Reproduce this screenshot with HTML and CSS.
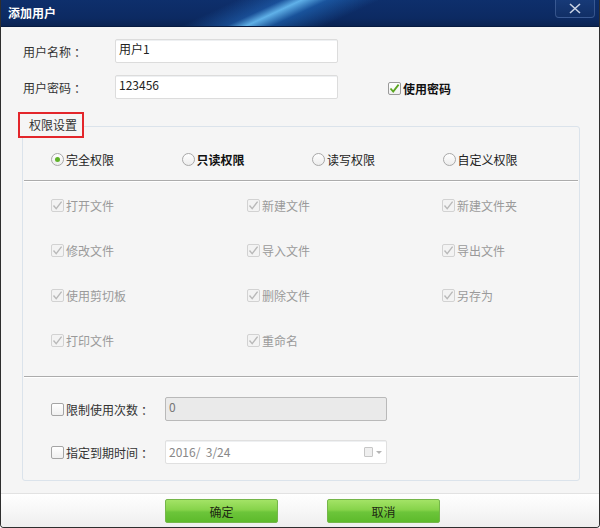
FILE: index.html
```html
<!DOCTYPE html>
<html lang="zh-CN">
<head>
<meta charset="utf-8">
<title>添加用户</title>
<link rel="stylesheet" href="styles.css">
</head>
<body>
<div class="window">
  <div class="titlebar">
    <span class="title">添加用户</span>
    <div class="close">
      <svg width="12" height="11" viewBox="0 0 12 11"><path d="M1 1 L11 10 M11 1 L1 10" stroke="#c9d3e4" stroke-width="1.6" fill="none"/></svg>
    </div>
  </div>
  <div class="content">
    <div class="form-row">
      <span class="label">用户名称<span class="colon">：</span></span>
      <div class="input">用户1</div>
    </div>
    <div class="form-row">
      <span class="label">用户密码<span class="colon">：</span></span>
      <div class="input">123456</div>
      <label class="use-pwd">
        <span class="cb cb-on">
          <svg width="11" height="11" viewBox="0 0 11 11"><path d="M1.5 5.5 L4.2 8.6 L9.6 1.6" stroke="#5aa51f" stroke-width="1.8" fill="none"/></svg>
        </span>
        <span class="strong">使用密码</span>
      </label>
    </div>

    <div class="group">
      <div class="legend">权限设置</div>
      <div class="radios">
        <div class="radio-item"><span class="radio on"><span class="dot"></span></span><span>完全权限</span></div>
        <div class="radio-item"><span class="radio"></span><span class="strong">只读权限</span></div>
        <div class="radio-item"><span class="radio"></span><span>读写权限</span></div>
        <div class="radio-item"><span class="radio"></span><span>自定义权限</span></div>
      </div>
      <div class="sep"></div>
      <div class="perms">
        <div class="perm"><span class="cb cb-dis"><svg width="11" height="11" viewBox="0 0 11 11"><path d="M1.5 5.5 L4.2 8.6 L9.6 1.6" stroke="#b9b9b9" stroke-width="1.4" fill="none"/></svg></span><span>打开文件</span></div>
        <div class="perm"><span class="cb cb-dis"><svg width="11" height="11" viewBox="0 0 11 11"><path d="M1.5 5.5 L4.2 8.6 L9.6 1.6" stroke="#b9b9b9" stroke-width="1.4" fill="none"/></svg></span><span>新建文件</span></div>
        <div class="perm"><span class="cb cb-dis"><svg width="11" height="11" viewBox="0 0 11 11"><path d="M1.5 5.5 L4.2 8.6 L9.6 1.6" stroke="#b9b9b9" stroke-width="1.4" fill="none"/></svg></span><span>新建文件夹</span></div>
        <div class="perm"><span class="cb cb-dis"><svg width="11" height="11" viewBox="0 0 11 11"><path d="M1.5 5.5 L4.2 8.6 L9.6 1.6" stroke="#b9b9b9" stroke-width="1.4" fill="none"/></svg></span><span>修改文件</span></div>
        <div class="perm"><span class="cb cb-dis"><svg width="11" height="11" viewBox="0 0 11 11"><path d="M1.5 5.5 L4.2 8.6 L9.6 1.6" stroke="#b9b9b9" stroke-width="1.4" fill="none"/></svg></span><span>导入文件</span></div>
        <div class="perm"><span class="cb cb-dis"><svg width="11" height="11" viewBox="0 0 11 11"><path d="M1.5 5.5 L4.2 8.6 L9.6 1.6" stroke="#b9b9b9" stroke-width="1.4" fill="none"/></svg></span><span>导出文件</span></div>
        <div class="perm"><span class="cb cb-dis"><svg width="11" height="11" viewBox="0 0 11 11"><path d="M1.5 5.5 L4.2 8.6 L9.6 1.6" stroke="#b9b9b9" stroke-width="1.4" fill="none"/></svg></span><span>使用剪切板</span></div>
        <div class="perm"><span class="cb cb-dis"><svg width="11" height="11" viewBox="0 0 11 11"><path d="M1.5 5.5 L4.2 8.6 L9.6 1.6" stroke="#b9b9b9" stroke-width="1.4" fill="none"/></svg></span><span>删除文件</span></div>
        <div class="perm"><span class="cb cb-dis"><svg width="11" height="11" viewBox="0 0 11 11"><path d="M1.5 5.5 L4.2 8.6 L9.6 1.6" stroke="#b9b9b9" stroke-width="1.4" fill="none"/></svg></span><span>另存为</span></div>
        <div class="perm"><span class="cb cb-dis"><svg width="11" height="11" viewBox="0 0 11 11"><path d="M1.5 5.5 L4.2 8.6 L9.6 1.6" stroke="#b9b9b9" stroke-width="1.4" fill="none"/></svg></span><span>打印文件</span></div>
        <div class="perm"><span class="cb cb-dis"><svg width="11" height="11" viewBox="0 0 11 11"><path d="M1.5 5.5 L4.2 8.6 L9.6 1.6" stroke="#b9b9b9" stroke-width="1.4" fill="none"/></svg></span><span>重命名</span></div>
      </div>
      <div class="sep sep2"></div>
      <div class="limit-row">
        <div class="limit-label"><span class="cb"></span><span>限制使用次数<span class="colon">：</span></span></div>
        <div class="input input-dis">0</div>
      </div>
      <div class="limit-row">
        <div class="limit-label"><span class="cb"></span><span>指定到期时间<span class="colon">：</span></span></div>
        <div class="input input-date">
          <span class="date-text">2016/&nbsp; 3/24</span>
          <span class="cal"></span>
          <span class="arrow"></span>
        </div>
      </div>
    </div>
  </div>
  <div class="footer">
    <div class="btn">确定</div>
    <div class="btn">取消</div>
  </div>
</div>
</body>
</html>
```

FILE: styles.css
```css
* { box-sizing: border-box; }
html, body { margin: 0; padding: 0; }
body {
  width: 600px;
  height: 528px;
  background: #ffffff;
  font-family: "Noto Sans CJK SC", "DejaVu Sans", sans-serif;
  font-size: 12px;
  color: #333;
}
.window {
  width: 600px;
  height: 528px;
  border-left: 1px solid #2e2e2e;
  border-right: 1px solid #2e2e2e;
  border-bottom: 1px solid #2e2e2e;
  border-radius: 0 0 4px 4px;
  background: #f5f5f5;
  display: flex;
  flex-direction: column;
  overflow: hidden;
}
.titlebar {
  height: 27px;
  flex: none;
  display: flex;
  align-items: center;
  justify-content: space-between;
  padding-left: 7px;
  background:
    linear-gradient(155deg, rgba(0,0,0,0) 36%, rgba(40,120,210,0.45) 43%, rgba(110,200,255,0.85) 46%, rgba(40,130,220,0.45) 50%, rgba(0,0,0,0) 58%),
    linear-gradient(180deg, #0e2f6c 0%, #0c2a62 70%, #0a2352 100%);
  border-bottom: 1px solid #061a40;
}
.title {
  color: #ffffff;
  font-weight: bold;
  font-size: 12px;
  line-height: 1;
}
.close {
  align-self: flex-start;
  width: 40px;
  height: 18px;
  margin-right: 4px;
  border: 1px solid rgba(120,150,200,0.35);
  border-top: none;
  border-radius: 0 0 4px 4px;
  background: linear-gradient(180deg, #173a78, #112f66);
  display: flex;
  align-items: center;
  justify-content: center;
}
.content {
  flex: 1;
  padding: 12px 21px 0 21px;
}
.form-row {
  display: flex;
  align-items: center;
  height: 24px;
  margin-bottom: 12px;
}
.label {
  width: 93px;
  padding-left: 1px;
  color: #333;
}
.colon {
  padding-left: 3px;
}
.input {
  width: 223px;
  height: 24px;
  border: 1px solid #dcdcdc;
  border-radius: 2px;
  background: #ffffff;
  padding: 2px 3px 0 3px;
  line-height: 14px;
  color: #222;
  box-shadow: inset 0 1px 0 #eef0f2;
}
.use-pwd {
  display: flex;
  align-items: center;
  margin-left: 50px;
  margin-top: 3px;
  gap: 2px;
}
.strong { font-weight: bold; color: #111; }
.cb {
  width: 13px;
  height: 13px;
  border: 1px solid #a5a5a5;
  border-radius: 2px;
  background: linear-gradient(180deg, #ffffff, #f0f0f0);
  display: inline-flex;
  align-items: center;
  justify-content: center;
  flex: none;
}
.cb-on { border-color: #9a9a9a; }
.cb-dis { border-color: #d2d2d2; background: #f3f3f3; }

.group {
  position: relative;
  margin-top: 27px;
  width: 558px;
  height: 355px;
  border: 1px solid #dbe3eb;
  border-radius: 3px;
  padding: 22px 0 0 0;
}
.legend {
  position: absolute;
  left: -5px;
  top: -15px;
  width: 66px;
  height: 26px;
  border: 2px solid #e3262b;
  background: #f5f5f5;
  padding-left: 9px;
  line-height: 21px;
  color: #333;
}
.radios {
  display: grid;
  grid-template-columns: repeat(4, 130.5px);
  padding-left: 28px;
  height: 20px;
  align-items: center;
}
.radio-item { display: flex; align-items: center; gap: 2px; color: #222; }
.radio {
  width: 13px;
  height: 13px;
  border-radius: 50%;
  border: 1px solid #a8a8a8;
  background: linear-gradient(180deg, #ffffff, #ececec);
  display: inline-flex;
  align-items: center;
  justify-content: center;
  flex: none;
}
.dot {
  width: 5px;
  height: 5px;
  border-radius: 50%;
  background: #5fb22a;
}
.sep {
  margin: 11px 1px 0 1px;
  height: 2px;
  border-top: 1px solid #acacac;
  border-bottom: 1px solid #ffffff;
}
.perms {
  display: grid;
  grid-template-columns: 196px 195px 120px;
  grid-auto-rows: 20px;
  row-gap: 25px;
  padding-left: 28px;
  margin-top: 13px;
}
.perm { display: flex; align-items: center; gap: 2px; color: #9a9a9a; }
.sep2 { margin-top: 26px; }
.limit-row {
  display: flex;
  align-items: center;
  padding-left: 28px;
  height: 24px;
  margin-top: 19px;
}
.limit-row + .limit-row { margin-top: 19px; }
.limit-label {
  width: 114px;
  display: flex;
  align-items: center;
  gap: 2px;
  color: #333;
}
.limit-row .input { width: 222px; }
.input-dis {
  background: #eaeaea;
  border-color: #b9b9b9;
  color: #777;
  box-shadow: none;
}
.input-date {
  display: flex;
  align-items: center;
  padding-top: 0;
  color: #888;
  border-color: #e0e0e0;
}
.date-text { flex: 1; }
.cal {
  width: 9px;
  height: 10px;
  border: 1px solid #c6c6c6;
  background: #efefef;
  border-radius: 1px;
  margin-right: 3px;
}
.arrow {
  width: 0;
  height: 0;
  border-left: 3px solid transparent;
  border-right: 3px solid transparent;
  border-top: 3px solid #b5b5b5;
  margin-right: 1px;
}
.footer {
  height: 34px;
  flex: none;
  border-top: 1px solid #e2e2e2;
  background: linear-gradient(180deg, #ffffff 0%, #f7f7f7 50%, #eeeeee 100%);
  display: flex;
  justify-content: center;
  gap: 49px;
  padding-top: 5px;
  padding-left: 5px;
}
.btn {
  width: 113px;
  height: 24px;
  border: 1px solid #75b64a;
  border-radius: 2px;
  background: linear-gradient(180deg, #a3e366 0%, #86d34a 45%, #6cc53a 55%, #5dba2b 100%);
  display: flex;
  align-items: center;
  justify-content: center;
  color: #1e2a12;
  font-size: 12px;
}
```
